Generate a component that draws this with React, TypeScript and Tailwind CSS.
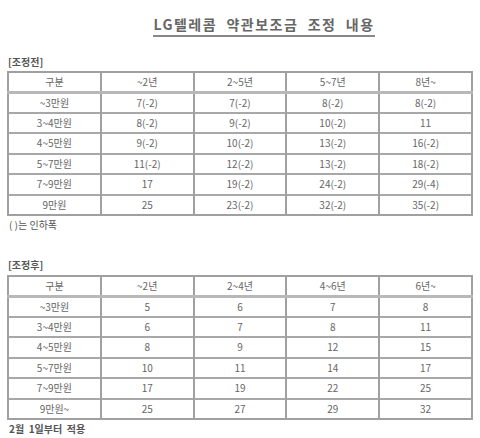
import React from "react";

const headBefore = ["구분", "~2년", "2~5년", "5~7년", "8년~"];
const rowsBefore = [
  ["~3만원", "7(-2)", "7(-2)", "8(-2)", "8(-2)"],
  ["3~4만원", "8(-2)", "9(-2)", "10(-2)", "11"],
  ["4~5만원", "9(-2)", "10(-2)", "13(-2)", "16(-2)"],
  ["5~7만원", "11(-2)", "12(-2)", "13(-2)", "18(-2)"],
  ["7~9만원", "17", "19(-2)", "24(-2)", "29(-4)"],
  ["9만원", "25", "23(-2)", "32(-2)", "35(-2)"],
];

const headAfter = ["구분", "~2년", "2~4년", "4~6년", "6년~"];
const rowsAfter = [
  ["~3만원", "5", "6", "7", "8"],
  ["3~4만원", "6", "7", "8", "11"],
  ["4~5만원", "8", "9", "12", "15"],
  ["5~7만원", "10", "11", "14", "17"],
  ["7~9만원", "17", "19", "22", "25"],
  ["9만원~", "25", "27", "29", "32"],
];

function RateTable({ head, rows }: { head: string[]; rows: string[][] }) {
  return (
    <table className="ml-[7px] w-[466px] table-fixed border-collapse border-2 border-[#a0a0a0] text-center text-[10px] leading-none text-[#666]">
      <thead>
        <tr className="h-[20px] border-b-[3px] border-[#b8b8b8]">
          {head.map((h, i) => (
            <th key={i} className="border-x-2 border-[#a0a0a0] font-normal">
              {h}
            </th>
          ))}
        </tr>
      </thead>
      <tbody>
        {rows.map((r, i) => (
          <tr key={i} className="h-[20.5px] border-t-2 border-[#a8a8a8]">
            {r.map((c, j) => (
              <td key={j} className="border-x-2 border-[#a0a0a0]">
                {c}
              </td>
            ))}
          </tr>
        ))}
      </tbody>
    </table>
  );
}

export default function App() {
  return (
    <div
      className="w-[480px] h-[438px] bg-white text-[#555] overflow-hidden"
      style={{ fontFamily: '"Noto Sans CJK KR", "Noto Sans", sans-serif' }}
    >
      {/* Title */}
      <div className="pt-[14px] pl-[48px] text-center leading-[18px]">
        <span className="border-b-2 border-[#888] pb-[1px] text-[14px] font-bold tracking-[1.5px] text-[#666]">
          LG텔레콤&nbsp; 약관보조금&nbsp; 조정&nbsp; 내용
        </span>
      </div>

      {/* Before */}
      <div className="mt-[23px] ml-[8px] text-[10px] font-bold leading-[12px]">[조정전]</div>
      <div className="mt-[3px]">
        <RateTable head={headBefore} rows={rowsBefore} />
      </div>
      <div className="mt-[3px] ml-[9px] text-[10px] leading-[12px]">( )는 인하폭</div>

      {/* After */}
      <div className="mt-[28px] ml-[8px] text-[10px] font-bold leading-[12px]">[조정후]</div>
      <div className="mt-[4px]">
        <RateTable head={headAfter} rows={rowsAfter} />
      </div>
      <div className="mt-[3px] ml-[9px] text-[10px] font-bold leading-[11px]">
        2월&nbsp; 1일부터&nbsp; 적용
      </div>
    </div>
  );
}
